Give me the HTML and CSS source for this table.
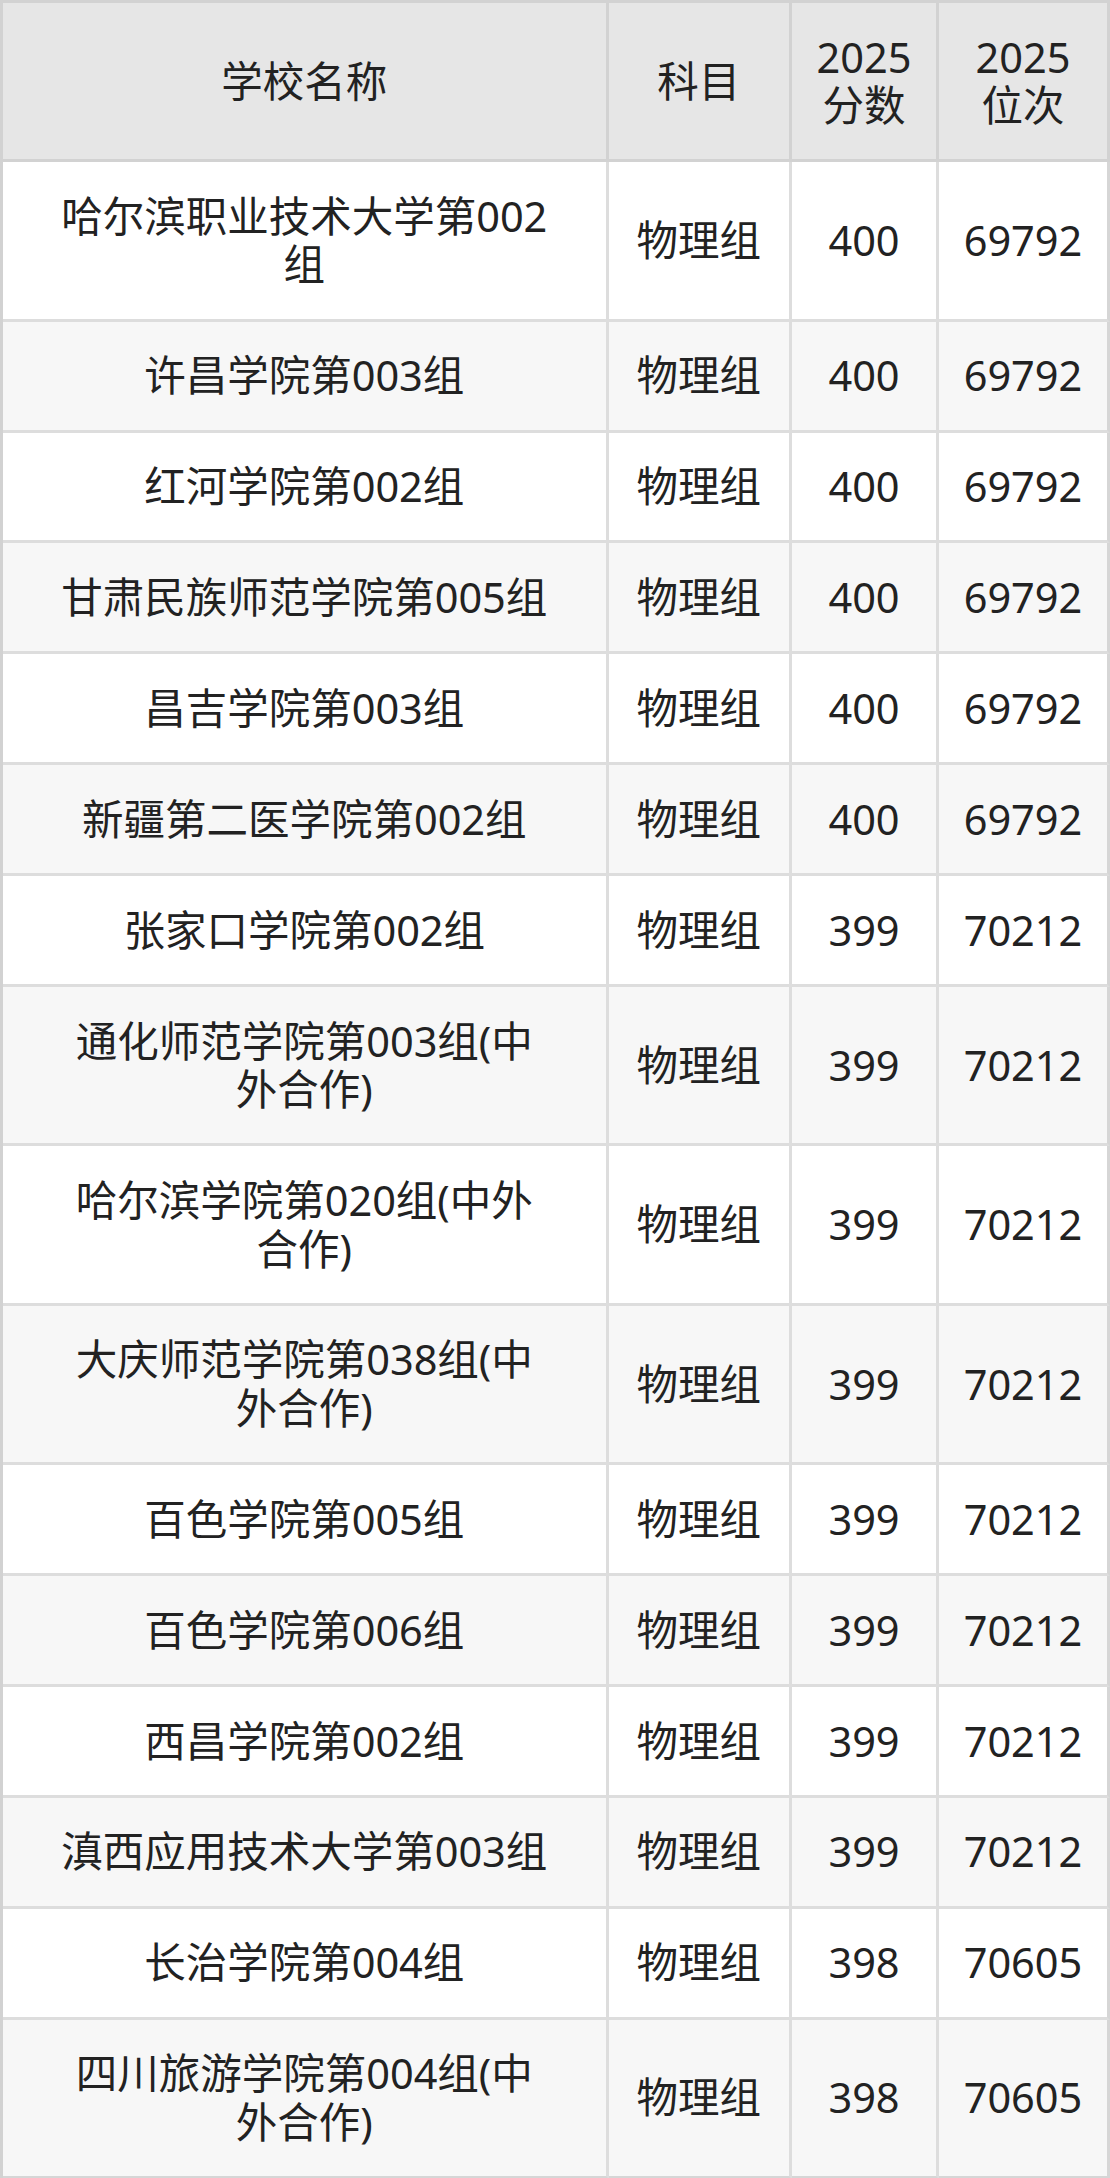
FILE: index.html
```html
<!DOCTYPE html>
<html lang="zh-CN">
<head>
<meta charset="utf-8">
<title>2025 分数位次</title>
<link rel="stylesheet" href="styles.css">
</head>
<body>
<div class="table">
  <div class="row head">
    <div class="cell name">学校名称</div>
    <div class="cell">科目</div>
    <div class="cell">2025<br>分数</div>
    <div class="cell">2025<br>位次</div>
  </div>
  <div class="row">
    <div class="cell name">哈尔滨职业技术大学第002组</div>
    <div class="cell">物理组</div>
    <div class="cell">400</div>
    <div class="cell">69792</div>
  </div>
  <div class="row">
    <div class="cell name">许昌学院第003组</div>
    <div class="cell">物理组</div>
    <div class="cell">400</div>
    <div class="cell">69792</div>
  </div>
  <div class="row">
    <div class="cell name">红河学院第002组</div>
    <div class="cell">物理组</div>
    <div class="cell">400</div>
    <div class="cell">69792</div>
  </div>
  <div class="row">
    <div class="cell name">甘肃民族师范学院第005组</div>
    <div class="cell">物理组</div>
    <div class="cell">400</div>
    <div class="cell">69792</div>
  </div>
  <div class="row">
    <div class="cell name">昌吉学院第003组</div>
    <div class="cell">物理组</div>
    <div class="cell">400</div>
    <div class="cell">69792</div>
  </div>
  <div class="row">
    <div class="cell name">新疆第二医学院第002组</div>
    <div class="cell">物理组</div>
    <div class="cell">400</div>
    <div class="cell">69792</div>
  </div>
  <div class="row">
    <div class="cell name">张家口学院第002组</div>
    <div class="cell">物理组</div>
    <div class="cell">399</div>
    <div class="cell">70212</div>
  </div>
  <div class="row">
    <div class="cell name">通化师范学院第003组(中外合作)</div>
    <div class="cell">物理组</div>
    <div class="cell">399</div>
    <div class="cell">70212</div>
  </div>
  <div class="row">
    <div class="cell name">哈尔滨学院第020组(中外合作)</div>
    <div class="cell">物理组</div>
    <div class="cell">399</div>
    <div class="cell">70212</div>
  </div>
  <div class="row">
    <div class="cell name">大庆师范学院第038组(中外合作)</div>
    <div class="cell">物理组</div>
    <div class="cell">399</div>
    <div class="cell">70212</div>
  </div>
  <div class="row">
    <div class="cell name">百色学院第005组</div>
    <div class="cell">物理组</div>
    <div class="cell">399</div>
    <div class="cell">70212</div>
  </div>
  <div class="row">
    <div class="cell name">百色学院第006组</div>
    <div class="cell">物理组</div>
    <div class="cell">399</div>
    <div class="cell">70212</div>
  </div>
  <div class="row">
    <div class="cell name">西昌学院第002组</div>
    <div class="cell">物理组</div>
    <div class="cell">399</div>
    <div class="cell">70212</div>
  </div>
  <div class="row">
    <div class="cell name">滇西应用技术大学第003组</div>
    <div class="cell">物理组</div>
    <div class="cell">399</div>
    <div class="cell">70212</div>
  </div>
  <div class="row">
    <div class="cell name">长治学院第004组</div>
    <div class="cell">物理组</div>
    <div class="cell">398</div>
    <div class="cell">70605</div>
  </div>
  <div class="row">
    <div class="cell name">四川旅游学院第004组(中外合作)</div>
    <div class="cell">物理组</div>
    <div class="cell">398</div>
    <div class="cell">70605</div>
  </div>
</div>
</body>
</html>
```

FILE: styles.css
```css
html, body {
  margin: 0;
  padding: 0;
  background: #ffffff;
}

body {
  font-family: "Noto Sans", "Noto Sans CJK SC", sans-serif;
  font-size: 41.5px;
  line-height: 48.4px;
  color: #222222;
}

.table {
  width: 1110px;
  box-sizing: border-box;
  border-left: 3px solid #d2d2d2;
  border-top: 3px solid #d2d2d2;
}

.row {
  display: grid;
  grid-template-columns: 605.5px 183.5px 147px 171px;
  background: #ffffff;
}

.row:nth-child(odd) {
  background: #f7f7f7;
}

.row.head {
  background: #e6e6e6;
}

.cell {
  box-sizing: border-box;
  display: flex;
  align-items: center;
  justify-content: center;
  text-align: center;
  padding: 29.75px 8px;
  border-right: 3px solid #dddddd;
  border-bottom: 3px solid #dddddd;
}

.cell.name {
  padding-left: 56px;
  padding-right: 56px;
}

.row.head .cell {
  border-color: #d2d2d2;
}

.row:last-child .cell {
  border-bottom-color: #d6d6d6;
}

.cell:last-child {
  border-right-color: #d6d6d6;
}
```
